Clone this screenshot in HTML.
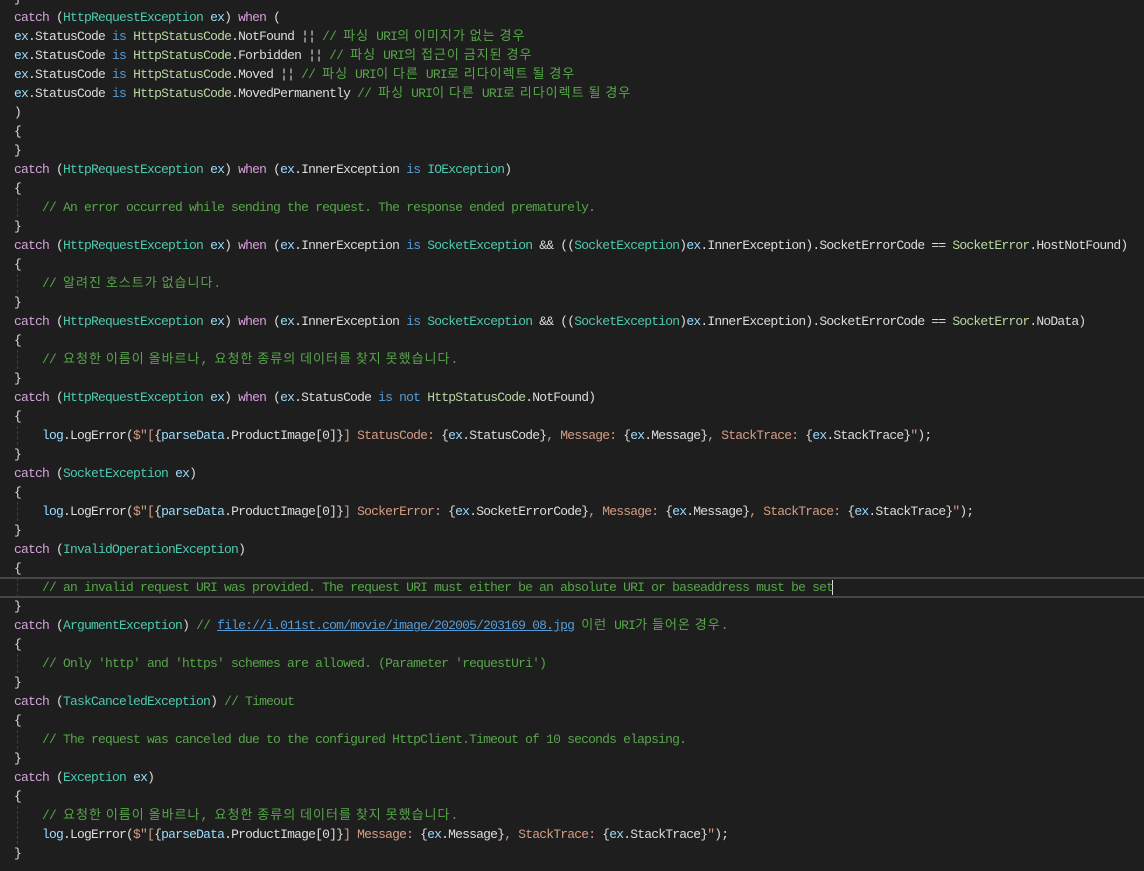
<!DOCTYPE html>
<html><head><meta charset="utf-8"><style>
html,body{margin:0;padding:0;background:#1e1e1e;width:1144px;height:871px;overflow:hidden}
pre{position:absolute;left:14px;top:-11px;margin:0;font-family:"Liberation Mono","Noto Sans CJK KR",monospace;font-size:13px;letter-spacing:-0.8px;line-height:19px;color:#dcdcdc;white-space:pre}
.k{font-family:"Noto Sans CJK KR","Liberation Mono",monospace;font-size:13px;letter-spacing:1px;line-height:0}
.c{color:#d8a0df}.b{color:#569cd6}.t{color:#4ec9b0}.e{color:#b8d7a3}.g{color:#57a64a}.s{color:#d69d85}.v{color:#9cdcfe}
.u{color:#569cd6;text-decoration:underline}
.hl{position:absolute;left:0;top:577px;width:1144px;height:17px;border-top:2px solid #464646;border-bottom:2px solid #464646}
.cur{position:absolute;left:832px;top:580px;width:1px;height:15px;background:#dcdcdc}
.ig{position:absolute;left:17px;width:0;border-left:1px dashed #404040}
</style></head><body>
<div class="hl"></div><div class="cur"></div>
<div class="ig" style="top:198px;height:19px"></div>
<div class="ig" style="top:274px;height:19px"></div>
<div class="ig" style="top:350px;height:19px"></div>
<div class="ig" style="top:426px;height:19px"></div>
<div class="ig" style="top:502px;height:19px"></div>
<div class="ig" style="top:578px;height:19px"></div>
<div class="ig" style="top:654px;height:19px"></div>
<div class="ig" style="top:730px;height:19px"></div>
<div class="ig" style="top:806px;height:38px"></div>
<pre>}
<span class="c">catch</span> (<span class="t">HttpRequestException</span> <span class="v">ex</span>) <span class="c">when</span> (
<span class="v">ex</span>.StatusCode <span class="b">is</span> <span class="e">HttpStatusCode</span>.NotFound ¦¦ <span class="g">// <span class="k">파싱</span> URI<span class="k">의 이미지가 없는 경우</span></span>
<span class="v">ex</span>.StatusCode <span class="b">is</span> <span class="e">HttpStatusCode</span>.Forbidden ¦¦ <span class="g">// <span class="k">파싱</span> URI<span class="k">의 접근이 금지된 경우</span></span>
<span class="v">ex</span>.StatusCode <span class="b">is</span> <span class="e">HttpStatusCode</span>.Moved ¦¦ <span class="g">// <span class="k">파싱</span> URI<span class="k">이 다른</span> URI<span class="k">로 리다이렉트 될 경우</span></span>
<span class="v">ex</span>.StatusCode <span class="b">is</span> <span class="e">HttpStatusCode</span>.MovedPermanently <span class="g">// <span class="k">파싱</span> URI<span class="k">이 다른</span> URI<span class="k">로 리다이렉트 될 경우</span></span>
)
{
}
<span class="c">catch</span> (<span class="t">HttpRequestException</span> <span class="v">ex</span>) <span class="c">when</span> (<span class="v">ex</span>.InnerException <span class="b">is</span> <span class="t">IOException</span>)
{
    <span class="g">// An error occurred while sending the request. The response ended prematurely.</span>
}
<span class="c">catch</span> (<span class="t">HttpRequestException</span> <span class="v">ex</span>) <span class="c">when</span> (<span class="v">ex</span>.InnerException <span class="b">is</span> <span class="t">SocketException</span> &amp;&amp; ((<span class="t">SocketException</span>)<span class="v">ex</span>.InnerException).SocketErrorCode == <span class="e">SocketError</span>.HostNotFound)
{
    <span class="g">// <span class="k">알려진 호스트가 없습니다</span>.</span>
}
<span class="c">catch</span> (<span class="t">HttpRequestException</span> <span class="v">ex</span>) <span class="c">when</span> (<span class="v">ex</span>.InnerException <span class="b">is</span> <span class="t">SocketException</span> &amp;&amp; ((<span class="t">SocketException</span>)<span class="v">ex</span>.InnerException).SocketErrorCode == <span class="e">SocketError</span>.NoData)
{
    <span class="g">// <span class="k">요청한 이름이 올바르나</span>, <span class="k">요청한 종류의 데이터를 찾지 못했습니다</span>.</span>
}
<span class="c">catch</span> (<span class="t">HttpRequestException</span> <span class="v">ex</span>) <span class="c">when</span> (<span class="v">ex</span>.StatusCode <span class="b">is not</span> <span class="e">HttpStatusCode</span>.NotFound)
{
    <span class="v">log</span>.LogError(<span class="s">$"[</span>{<span class="v">parseData</span>.ProductImage[0]}<span class="s">] StatusCode: </span>{<span class="v">ex</span>.StatusCode}<span class="s">, Message: </span>{<span class="v">ex</span>.Message}<span class="s">, StackTrace: </span>{<span class="v">ex</span>.StackTrace}<span class="s">"</span>);
}
<span class="c">catch</span> (<span class="t">SocketException</span> <span class="v">ex</span>)
{
    <span class="v">log</span>.LogError(<span class="s">$"[</span>{<span class="v">parseData</span>.ProductImage[0]}<span class="s">] SockerError: </span>{<span class="v">ex</span>.SocketErrorCode}<span class="s">, Message: </span>{<span class="v">ex</span>.Message}<span class="s">, StackTrace: </span>{<span class="v">ex</span>.StackTrace}<span class="s">"</span>);
}
<span class="c">catch</span> (<span class="t">InvalidOperationException</span>)
{
    <span class="g">// an invalid request URI was provided. The request URI must either be an absolute URI or baseaddress must be set</span>
}
<span class="c">catch</span> (<span class="t">ArgumentException</span>) <span class="g">// <span class="u">file://i.011st.com/movie/image/202005/203169_08.jpg</span> <span class="k">이런</span> URI<span class="k">가 들어온 경우</span>.</span>
{
    <span class="g">// Only 'http' and 'https' schemes are allowed. (Parameter 'requestUri')</span>
}
<span class="c">catch</span> (<span class="t">TaskCanceledException</span>) <span class="g">// Timeout</span>
{
    <span class="g">// The request was canceled due to the configured HttpClient.Timeout of 10 seconds elapsing.</span>
}
<span class="c">catch</span> (<span class="t">Exception</span> <span class="v">ex</span>)
{
    <span class="g">// <span class="k">요청한 이름이 올바르나</span>, <span class="k">요청한 종류의 데이터를 찾지 못했습니다</span>.</span>
    <span class="v">log</span>.LogError(<span class="s">$"[</span>{<span class="v">parseData</span>.ProductImage[0]}<span class="s">] Message: </span>{<span class="v">ex</span>.Message}<span class="s">, StackTrace: </span>{<span class="v">ex</span>.StackTrace}<span class="s">"</span>);
}
</pre>
</body></html>
